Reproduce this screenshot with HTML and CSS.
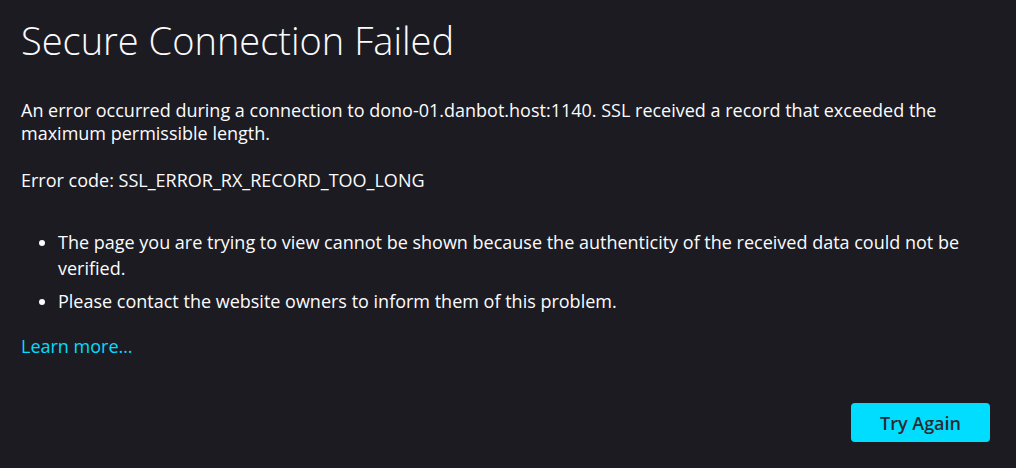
FILE: index.html
```html
<!DOCTYPE html>
<html lang="en">
<head>
<meta charset="utf-8">
<title>Problem loading page</title>
<link rel="stylesheet" href="styles.css">
</head>
<body>
<main class="container">
  <h1 class="title">Secure Connection Failed</h1>
  <p class="desc">An error occurred during a connection to dono-01.danbot.host:1140. SSL received a record that exceeded the maximum permissible length.</p>
  <p class="code">Error code: SSL_ERROR_RX_RECORD_TOO_LONG</p>
  <ul class="reasons">
    <li>The page you are trying to view cannot be shown because the authenticity of the received data could not be verified.</li>
    <li>Please contact the website owners to inform them of this problem.</li>
  </ul>
  <p class="learn-wrap"><a class="learn" href="#">Learn more…</a></p>
  <div class="actions">
    <button class="retry">Try Again</button>
  </div>
</main>
</body>
</html>
```
FILE: styles.css
```css
html, body {
  margin: 0;
  padding: 0;
  background: #1c1b22;
  color: #fbfbfe;
  font-family: "Open Sans", "Noto Sans", sans-serif;
  font-size: 18px;
}
.container {
  padding: 14px 26px 0 21px;
  box-sizing: border-box;
}
.title {
  margin: 0;
  font-weight: 300;
  font-size: 38px;
  line-height: 52px;
}
.desc {
  margin: 33px 0 0;
  line-height: 23px;
}
.code {
  margin: 24px 0 0;
  line-height: 23px;
}
.reasons {
  margin: 37px 0 0;
  padding-left: 37px;
}
.reasons li {
  line-height: 26px;
  margin-bottom: 7px;
}
.reasons li:last-child {
  margin-bottom: 0;
}
.learn-wrap {
  margin: 21px 0 0;
  line-height: 23px;
}
.learn {
  color: #00ddff;
  text-decoration: none;
}
.actions {
  display: flex;
  justify-content: flex-end;
  margin-top: 45px;
}
.retry {
  width: 139px;
  height: 39px;
  border: none;
  border-radius: 4px;
  background: #00ddff;
  color: #2b2a33;
  font-family: inherit;
  font-size: 18px;
  font-weight: 600;
}
```
